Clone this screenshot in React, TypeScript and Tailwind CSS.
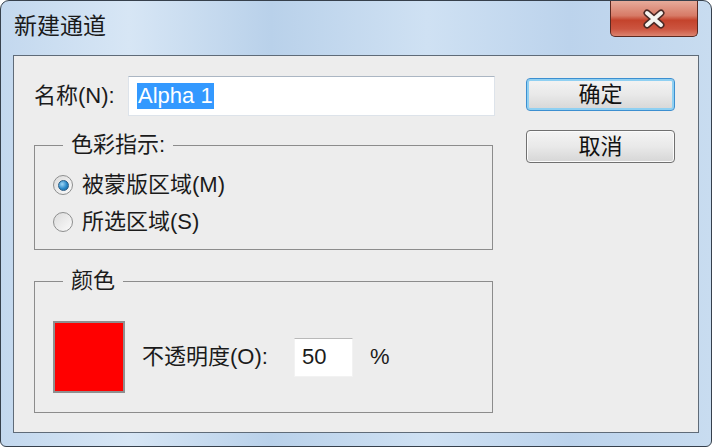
import React from "react";

const font = "font-['Liberation_Sans','Noto_Sans_CJK_SC',sans-serif]";

function Radio({ checked, label }: { checked?: boolean; label: string }) {
  return (
    <div className="flex h-[26px] items-center">
      <div className="flex h-[20px] w-[20px] items-center justify-center rounded-full border border-[#8e8f8f] bg-gradient-to-br from-[#dcdcdc] to-[#fbfbfb]">
        {checked && (
          <div className="h-[11px] w-[11px] rounded-full border border-[#2a5d86] bg-[radial-gradient(circle_at_35%_35%,#9fd6f5,#2a89c9_55%,#1d5f93)]" />
        )}
      </div>
      <span className="ml-[9px] text-[22px] leading-[26px] text-[#1b1b1b]">{label}</span>
    </div>
  );
}

function Button({ label, primary }: { label: string; primary?: boolean }) {
  return (
    <div
      className={
        "flex h-[33px] w-[149px] items-center justify-center rounded-[4px] border bg-gradient-to-b from-[#f4f4f4] via-[#e9e9e9] to-[#d6d6d6] text-[22px] leading-[26px] text-[#111] " +
        (primary ? "border-[#3c8fd0] shadow-[inset_0_0_0_2px_#8fd0f2]" : "border-[#707070] shadow-[inset_0_0_0_1px_#fbfbfb]")
      }
    >
      {label}
    </div>
  );
}

export default function App() {
  return (
    <div className={"h-[447px] w-[712px] bg-white " + font}>
      <div className="flex h-full flex-col rounded-t-[9px] rounded-b-[6px] border border-[#36404c] bg-[linear-gradient(90deg,#c3d8ee_0%,#d7e6f5_18%,#b9d1ea_38%,#cfe1f3_60%,#bcd3ec_80%,#c8dcf0_100%)] px-[12px] pb-[13px]">
        {/* title bar */}
        <div className="flex h-[54px] items-start">
          <div className="pt-[11px] pl-[1px] text-[23px] leading-[28px] text-[#1a1a1a]">新建通道</div>
          <div className="ml-auto mr-[1px] flex h-[36px] w-[88px] items-center justify-center rounded-b-[5px] border border-t-0 border-[#5b2a22] bg-[linear-gradient(180deg,#e6ab9b_0%,#d77a66_42%,#c4432c_55%,#cc5540_80%,#dc8470_100%)]">
            <svg width="26" height="20" viewBox="0 0 26 20">
              <path d="M6 4 L20 16 M20 4 L6 16" stroke="#4a2a26" strokeWidth="7" strokeLinecap="round" />
              <path d="M6 4 L20 16 M20 4 L6 16" stroke="#f4f4f0" strokeWidth="4" strokeLinecap="round" />
            </svg>
          </div>
        </div>

        {/* client area */}
        <div className="flex flex-1 border border-[#5f6b78] bg-[#ededed]">
          <div className="ml-[20px] w-[461px] pt-[20px]">
            <div className="flex h-[40px] items-center">
              <div className="w-[94px] text-[22px] leading-[26px] text-[#1b1b1b]">名称(N):</div>
              <div className="flex h-[40px] flex-1 items-center border border-[#dde3ea] border-t-[#abb6c3] bg-white pl-[8px]">
                <span className="bg-[#3399ff] px-[1px] text-[22px] leading-[26px] text-white">Alpha 1</span>
              </div>
            </div>

            <fieldset className="mt-[16px] w-[459px] border border-[#8c8c8c] pb-[14px] pl-[18px]">
              <legend className="ml-[10px] px-[8px] text-[22px] leading-[26px] text-[#1b1b1b]">色彩指示:</legend>
              <div className="flex flex-col gap-[11px] pt-[14px]">
                <Radio checked label="被蒙版区域(M)" />
                <Radio label="所选区域(S)" />
              </div>
            </fieldset>

            <fieldset className="mt-[18px] w-[459px] border border-[#8c8c8c] pb-[19px] pl-[18px]">
              <legend className="ml-[10px] px-[8px] text-[22px] leading-[26px] text-[#1b1b1b]">颜色</legend>
              <div className="flex items-center pt-[27px]">
                <div className="h-[72px] w-[72px] border-2 border-[#8f8f8f] bg-[#ff0000]" />
                <div className="ml-[17px] w-[152px] text-[22px] leading-[26px] text-[#1b1b1b]">不透明度(O):</div>
                <div className="flex h-[39px] w-[59px] items-center border border-[#f2f2f2] border-t-[#b9b9b9] bg-white pl-[7px] text-[22px] leading-[26px] text-[#1b1b1b]">
                  50
                </div>
                <div className="ml-[17px] text-[22px] leading-[26px] text-[#1b1b1b]">%</div>
              </div>
            </fieldset>
          </div>

          <div className="ml-[31px] flex flex-col gap-[19px] pt-[22px]">
            <Button primary label="确定" />
            <Button label="取消" />
          </div>
        </div>
      </div>
    </div>
  );
}
